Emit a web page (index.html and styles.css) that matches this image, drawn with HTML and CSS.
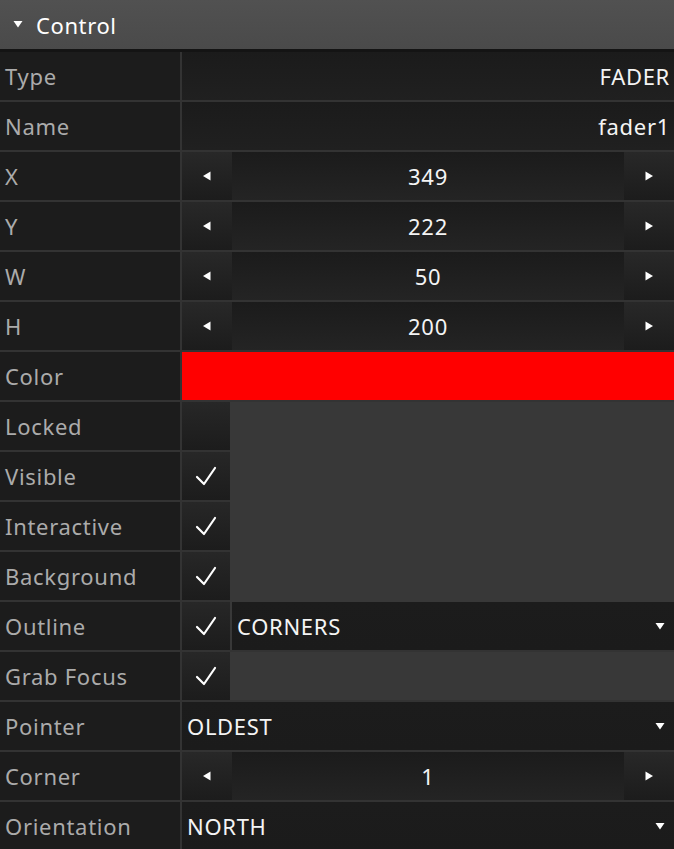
FILE: index.html
```html
<!DOCTYPE html>
<html>
<head>
<meta charset="utf-8">
<link rel="stylesheet" href="styles.css">
</head>
<body>
<div class="panel">
  <div class="header">
    <svg class="caret" width="10" height="8" viewBox="0 0 10 8"><polygon points="0.5,1 9.5,1 5,7.5" fill="#fff"/></svg>
    <span class="title">Control</span>
  </div>
  <div class="grid">
    <div class="label">Type</div>
    <div class="value text-right"><span>FADER</span></div>

    <div class="label">Name</div>
    <div class="value text-right"><span>fader1</span></div>

    <div class="label">X</div>
    <div class="value number">
      <div class="btn"><svg width="8" height="10" viewBox="0 0 8 10"><polygon points="7.5,0.5 7.5,9.5 0,5" fill="#fff"/></svg></div>
      <div class="num">349</div>
      <div class="btn"><svg width="8" height="10" viewBox="0 0 8 10"><polygon points="0.5,0.5 0.5,9.5 8,5" fill="#fff"/></svg></div>
    </div>

    <div class="label">Y</div>
    <div class="value number">
      <div class="btn"><svg width="8" height="10" viewBox="0 0 8 10"><polygon points="7.5,0.5 7.5,9.5 0,5" fill="#fff"/></svg></div>
      <div class="num">222</div>
      <div class="btn"><svg width="8" height="10" viewBox="0 0 8 10"><polygon points="0.5,0.5 0.5,9.5 8,5" fill="#fff"/></svg></div>
    </div>

    <div class="label">W</div>
    <div class="value number">
      <div class="btn"><svg width="8" height="10" viewBox="0 0 8 10"><polygon points="7.5,0.5 7.5,9.5 0,5" fill="#fff"/></svg></div>
      <div class="num">50</div>
      <div class="btn"><svg width="8" height="10" viewBox="0 0 8 10"><polygon points="0.5,0.5 0.5,9.5 8,5" fill="#fff"/></svg></div>
    </div>

    <div class="label">H</div>
    <div class="value number">
      <div class="btn"><svg width="8" height="10" viewBox="0 0 8 10"><polygon points="7.5,0.5 7.5,9.5 0,5" fill="#fff"/></svg></div>
      <div class="num">200</div>
      <div class="btn"><svg width="8" height="10" viewBox="0 0 8 10"><polygon points="0.5,0.5 0.5,9.5 8,5" fill="#fff"/></svg></div>
    </div>

    <div class="label">Color</div>
    <div class="value swatch"></div>

    <div class="label">Locked</div>
    <div class="value"><div class="check"></div><div class="fill"></div></div>

    <div class="label">Visible</div>
    <div class="value"><div class="check"><svg width="48" height="48" viewBox="0 0 48 48"><polyline points="15,25 22,32 33,16" fill="none" stroke="#fff" stroke-width="2.2" stroke-linecap="round" stroke-linejoin="round"/></svg></div><div class="fill"></div></div>

    <div class="label">Interactive</div>
    <div class="value"><div class="check"><svg width="48" height="48" viewBox="0 0 48 48"><polyline points="15,25 22,32 33,16" fill="none" stroke="#fff" stroke-width="2.2" stroke-linecap="round" stroke-linejoin="round"/></svg></div><div class="fill"></div></div>

    <div class="label">Background</div>
    <div class="value"><div class="check"><svg width="48" height="48" viewBox="0 0 48 48"><polyline points="15,25 22,32 33,16" fill="none" stroke="#fff" stroke-width="2.2" stroke-linecap="round" stroke-linejoin="round"/></svg></div><div class="fill"></div></div>

    <div class="label">Outline</div>
    <div class="value split">
      <div class="check"><svg width="48" height="48" viewBox="0 0 48 48"><polyline points="15,25 22,32 33,16" fill="none" stroke="#fff" stroke-width="2.2" stroke-linecap="round" stroke-linejoin="round"/></svg></div>
      <div class="select"><span>CORNERS</span><svg width="10" height="8" viewBox="0 0 10 8"><polygon points="0.5,1 9.5,1 5,7.5" fill="#fff"/></svg></div>
    </div>

    <div class="label">Grab Focus</div>
    <div class="value"><div class="check"><svg width="48" height="48" viewBox="0 0 48 48"><polyline points="15,25 22,32 33,16" fill="none" stroke="#fff" stroke-width="2.2" stroke-linecap="round" stroke-linejoin="round"/></svg></div><div class="fill last"></div></div>

    <div class="label">Pointer</div>
    <div class="value select"><span>OLDEST</span><svg width="10" height="8" viewBox="0 0 10 8"><polygon points="0.5,1 9.5,1 5,7.5" fill="#fff"/></svg></div>

    <div class="label">Corner</div>
    <div class="value number">
      <div class="btn"><svg width="8" height="10" viewBox="0 0 8 10"><polygon points="7.5,0.5 7.5,9.5 0,5" fill="#fff"/></svg></div>
      <div class="num">1</div>
      <div class="btn"><svg width="8" height="10" viewBox="0 0 8 10"><polygon points="0.5,0.5 0.5,9.5 8,5" fill="#fff"/></svg></div>
    </div>

    <div class="label">Orientation</div>
    <div class="value select"><span>NORTH</span><svg width="10" height="8" viewBox="0 0 10 8"><polygon points="0.5,1 9.5,1 5,7.5" fill="#fff"/></svg></div>
  </div>
</div>
</body>
</html>
```

FILE: styles.css
```css
html, body {
  margin: 0;
  padding: 0;
  background: #383838;
}
body {
  font-family: "Noto Sans", "Open Sans", sans-serif;
  font-size: 22px;
  letter-spacing: 0.7px;
  width: 674px;
  height: 849px;
  overflow: hidden;
}
.panel {
  width: 674px;
}
.header {
  height: 49px;
  background: linear-gradient(#515151, #4a4a4a);
  border-bottom: 3px solid #141414;
  display: flex;
  align-items: center;
  padding-left: 13px;
}
.caret {
  margin-right: 13px;
  margin-top: -2px;
}
.title {
  color: #fff;
  font-size: 22px;
  letter-spacing: 0.6px;
}
.grid {
  display: grid;
  grid-template-columns: 180px 1fr;
  grid-auto-rows: 48px;
  column-gap: 2px;
  row-gap: 2px;
  background: #333333;
}
.label {
  background: #1c1c1c;
  color: #ababab;
  display: flex;
  align-items: center;
  padding-left: 5px;
  white-space: nowrap;
}
.value {
  color: #f4f4f4;
  display: flex;
  align-items: center;
  min-width: 0;
}
.text-right {
  justify-content: flex-end;
  padding-right: 4px;
  background: linear-gradient(#1b1b1b, #202020);
}
.number .btn {
  width: 50px;
  height: 100%;
  display: flex;
  align-items: center;
  justify-content: center;
  background: linear-gradient(#282828, #1c1c1c);
}
.number .num {
  flex: 1;
  height: 100%;
  display: flex;
  align-items: center;
  justify-content: center;
  background: linear-gradient(#1b1b1b, #242424);
}
.swatch {
  background: #ff0000;
}
.check {
  width: 48px;
  height: 48px;
  flex: none;
  background: linear-gradient(#272727, #1c1c1c);
  display: flex;
}
.fill {
  flex: 1;
  height: 100%;
  background: #383838;
  box-shadow: 0 2px 0 #383838;
}
.fill.last {
  box-shadow: none;
}
.split {
  gap: 2px;
  background: #383838;
}
.select {
  flex: 1;
  height: 100%;
  display: flex;
  align-items: center;
  justify-content: space-between;
  padding-left: 5px;
  padding-right: 9px;
  background: linear-gradient(#1c1c1c, #1b1b1b);
  color: #f4f4f4;
  box-sizing: border-box;
}
```
